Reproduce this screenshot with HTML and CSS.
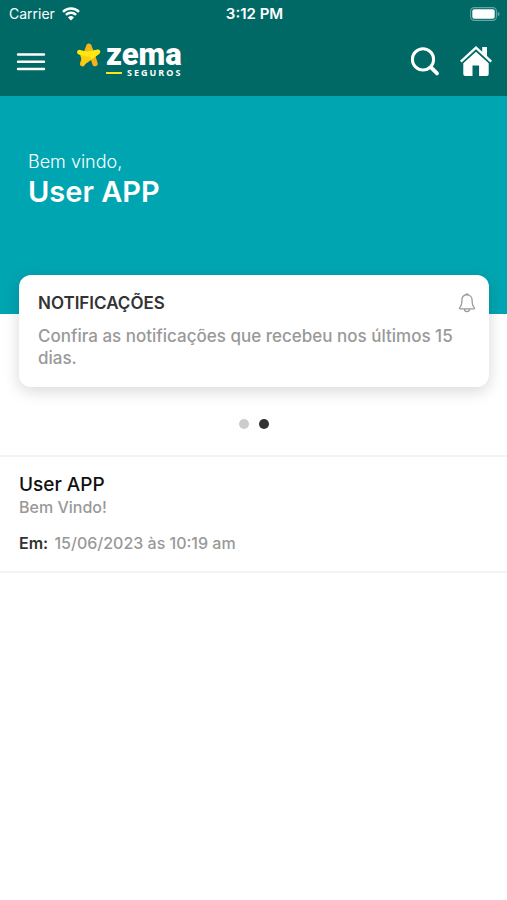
FILE: index.html
```html
<!DOCTYPE html>
<html lang="pt-BR">
<head>
<meta charset="UTF-8">
<meta name="viewport" content="width=device-width, initial-scale=1.0">
<title>Zema Seguros</title>
<link rel="stylesheet" href="styles.css">
</head>
<body>

<header class="topbar">
    <div class="status">
        <div class="carrier">
            <span>Carrier</span>
            <svg width="18" height="14" viewBox="0 0 18 14" fill="none" stroke="#fff" stroke-width="2.4">
                <path d="M1 4.8a11.4 11.4 0 0 1 16 0M3.9 7.8a7.3 7.3 0 0 1 10.2 0"/>
                <path d="M9 13.4 6 10.4a4.3 4.3 0 0 1 6 0z" fill="#fff" stroke="none"/>
            </svg>
        </div>
        <span class="time">3:12 PM</span>
        <div class="battery">
            <svg width="30" height="14" viewBox="0 0 30 14">
                <rect x="0.6" y="0.6" width="25.8" height="12.8" rx="3.6" fill="none" stroke="#fff" stroke-opacity="0.4" stroke-width="1.1"/>
                <rect x="2.3" y="2.3" width="22.4" height="9.4" rx="2" fill="#fff"/>
                <path d="M27.7 4.8c2.4.7 2.4 3.7 0 4.4z" fill="#fff" fill-opacity="0.4"/>
            </svg>
        </div>
    </div>
    <nav class="nav">
        <button class="icon-btn" aria-label="Menu">
            <svg width="30" height="20" viewBox="0 0 30 20" stroke="#fff" stroke-width="2.4" stroke-linecap="round">
                <path d="M2 2.5h26M2 9.7h26M2 17h26"/>
            </svg>
        </button>
        <a class="logo" href="#">
            <svg width="26" height="26" viewBox="0 0 26 26" stroke-linejoin="round" stroke-linecap="round" fill="none">
                <path d="M12.8 4.4 10.4 11 6.6 21.6M12.8 4.4 15.6 11 19 21.6" stroke="#f3b31c" stroke-width="5.4"/>
                <path d="M12.8 5 8 12l4.8 7L18 12z" fill="#f6bd1a"/>
                <path d="M3.4 10.4 12 11.6 22 9.8 14 16.4 6.8 21.4" fill="#f9cf12" stroke="#f9cf12" stroke-width="3.8"/>
                <path d="M3.4 10.2 11 12.2 22 9.8 16 14.4" fill="#ffe70f" stroke="#ffe70f" stroke-width="4.6"/>
            </svg>
            <span class="brand">
                <span class="brand-name">zema</span>
                <span class="brand-sub">SEGUROS</span>
            </span>
        </a>
        <button class="icon-btn search" aria-label="Buscar">
            <svg width="30" height="30" viewBox="0 0 30 30" fill="none" stroke="#fff" stroke-linecap="round">
                <circle cx="13" cy="12.4" r="10.6" stroke-width="3"/>
                <path d="M21 20.4l6 6" stroke-width="3.8"/>
            </svg>
        </button>
        <a class="icon-btn" href="#" aria-label="Início">
            <svg width="34" height="32" viewBox="0 0 34 32" fill="#fff">
                <path d="M17 0 1 14.7 2.6 16.4 17 3.3 31.4 16.4 33 14.7 28 10V1h-4.8v4.7z"/>
                <path d="M17 5.7 4.3 17.2V28c0 1.2.9 2 2 2h7.2V19.6h6.6V30h7.6c1.2 0 2-.8 2-2V17.2z"/>
            </svg>
        </a>
    </nav>
</header>

<main>
    <section class="hero">
        <p class="welcome">Bem vindo,</p>
        <h1>User APP</h1>
    </section>

    <section class="card">
        <div class="card-head">
            <h2>NOTIFICAÇÕES</h2>
            <svg width="18" height="20" viewBox="0 0 18 20" fill="none" stroke="#999" stroke-width="1.3" stroke-linejoin="round">
                <path d="M9 1.9c-3.1 0-5.1 2.2-5.1 5.3 0 4.6-.8 6-2.2 7.4-.4.5-.1 1.2.5 1.2h13.6c.6 0 .9-.7.5-1.2-1.4-1.4-2.2-2.8-2.2-7.4 0-3.1-2-5.3-5.1-5.3z"/>
                <path d="M7.8 2c0-1.4 2.4-1.4 2.4 0M6.5 16c.1 3.4 4.9 3.4 5 0"/>
            </svg>
        </div>
        <p>Confira as notificações que recebeu nos últimos 15 dias.</p>
    </section>

    <div class="dots">
        <span class="dot"></span>
        <span class="dot active"></span>
    </div>

    <article class="message">
        <h3>User APP</h3>
        <p>Bem Vindo!</p>
        <p class="date"><b>Em:</b> 15/06/2023 às 10:19 am</p>
    </article>
</main>

</body>
</html>
```
FILE: styles.css
```css
* {
    box-sizing: border-box;
}
body {
    margin: 0;
    background: #fff;
    font-family: Inter, "Liberation Sans", sans-serif;
    color: #333;
}
h1, h2, h3, p {
    margin: 0;
}
.topbar {
    background: #006966;
    color: #fff;
}
.status {
    display: grid;
    grid-template-columns: 1fr auto 1fr;
    align-items: center;
    height: 27px;
    padding: 0 7px 0 9px;
    font-size: 14px;
}
.carrier {
    display: flex;
    align-items: center;
    gap: 7px;
}
.time {
    font-size: 15px;
    font-weight: 600;
}
.battery {
    display: flex;
    justify-content: flex-end;
}
.nav {
    display: flex;
    align-items: center;
    height: 69px;
    padding: 0 14px 0 16px;
}
.icon-btn {
    display: flex;
    padding: 0;
    border: none;
    background: none;
    cursor: pointer;
}
.search {
    margin-left: auto;
    margin-right: 19px;
}
.logo {
    display: flex;
    align-items: flex-start;
    gap: 4px;
    margin-left: 30px;
    padding-bottom: 2px;
    color: #fff;
    text-decoration: none;
}
.brand {
    display: flex;
    flex-direction: column;
}
.brand-name {
    font: 900 31px/25px Roboto, sans-serif;
}
.brand-sub {
    display: flex;
    align-items: center;
    gap: 5px;
    font: 700 9px/12px "Open Sans", sans-serif;
    letter-spacing: 2px;
}
.brand-sub::before {
    content: "";
    width: 16px;
    height: 2px;
    background: #f5e51b;
}
.hero {
    height: 218px;
    padding: 54px 28px 0;
    background: #00a5b2;
    color: #fff;
}
.welcome {
    font-size: 18px;
    font-weight: 300;
    line-height: 24px;
}
.hero h1 {
    font-size: 29px;
    font-weight: 600;
    line-height: 36px;
}
.card {
    position: relative;
    margin: -39px 18px 0 19px;
    padding: 16px 13px 18px 19px;
    border-radius: 12px;
    background: #fff;
    box-shadow: 0 4px 16px rgba(0, 0, 0, 0.16);
}
.card-head {
    display: flex;
    justify-content: space-between;
    align-items: center;
    height: 24px;
    margin-bottom: 10px;
}
.card h2 {
    font-size: 17px;
    font-weight: 600;
}
.card p {
    padding-right: 16px;
    font-size: 17px;
    font-weight: 500;
    line-height: 22px;
    color: #999;
}
.dots {
    display: flex;
    justify-content: center;
    gap: 10px;
    padding: 32px 0 26px;
}
.dot {
    width: 10px;
    height: 10px;
    border-radius: 50%;
    background: #ccc;
}
.dot.active {
    background: #333;
}
.message {
    padding: 16px 19px 18px;
    border-top: 2px solid #f3f3f3;
    border-bottom: 2px solid #f3f3f3;
}
.message h3 {
    font-size: 19px;
    font-weight: 500;
    line-height: 24px;
    color: #111;
}
.message p {
    font-size: 16px;
    font-weight: 500;
    line-height: 20px;
    color: #999;
}
.message .date {
    margin-top: 16px;
}
.date b {
    margin-right: 2px;
    font-weight: 600;
    color: #333;
}
```
